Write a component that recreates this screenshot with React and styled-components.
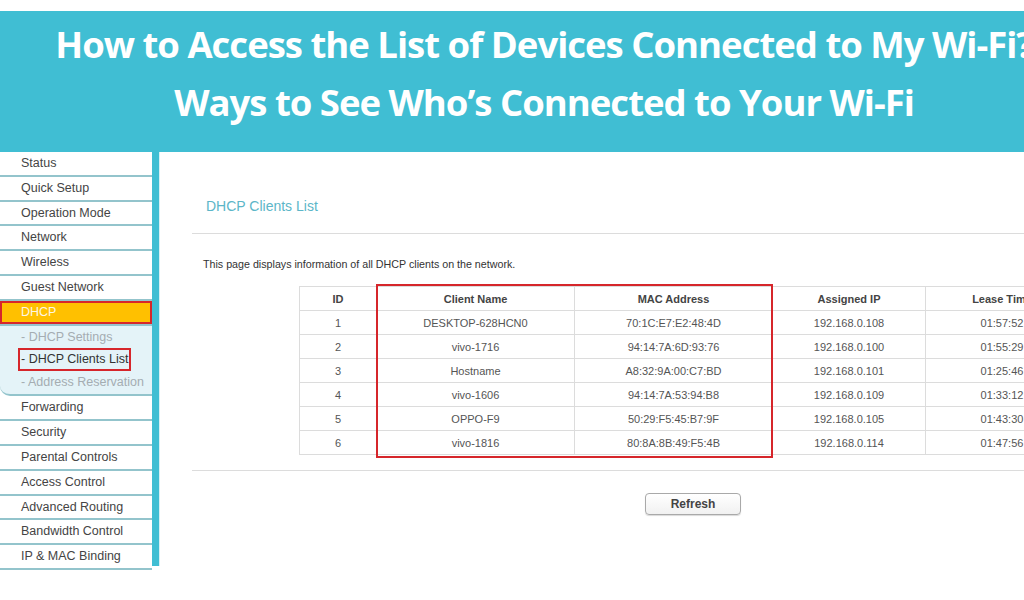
import styled, { createGlobalStyle } from 'styled-components'

const GlobalStyle = createGlobalStyle`
  html, body {
    margin: 0;
    padding: 0;
    background: #fff;
    overflow: hidden;
  }
  body {
    font-family: "Liberation Sans", Arial, sans-serif;
  }
`

const Page = styled.div`
  width: 1024px;
  height: 600px;
  overflow: hidden;
  padding-top: 11px;
  box-sizing: border-box;
`

const Banner = styled.header`
  height: 141px;
  background: #40bed3;
  overflow: hidden;
  display: flex;
  flex-direction: column;
  padding-top: 13px;
  box-sizing: border-box;
`

const BannerLine = styled.h1`
  width: 1088px;
  margin: 0;
  height: 58px;
  line-height: 40px;
  text-align: center;
  white-space: nowrap;
  color: #fff;
  font-family: "Open Sans", "Noto Sans", sans-serif;
  font-weight: 700;
  font-size: 36.5px;
  letter-spacing: -1px;
`

const Body = styled.div`
  display: flex;
  height: 414px;
`

const Sidebar = styled.nav`
  width: 152px;
  flex-shrink: 0;
  border-right: 7px solid #40bed3;
  background: #fff;
`

const NavItem = styled.div`
  height: 22.8px;
  line-height: 22.8px;
  border-bottom: 2px solid #93c4cc;
  padding-left: 21px;
  font-size: 12.5px;
  color: ${p => (p.$active ? '#fdf6e6' : '#444')};
  background: ${p => (p.$active ? '#ffc000' : '#fff')};
  box-shadow: ${p => (p.$active ? 'inset 0 0 0 2px #d6262b' : 'none')};
`

const SubMenu = styled.div`
  background: #e4f3f8;
  border-bottom: 2px solid #93c4cc;
  border-bottom-left-radius: 10px;
  padding-bottom: 1px;
`

const SubItem = styled.div`
  height: 22.6px;
  line-height: 22.6px;
  padding-left: ${p => (p.$current ? '18px' : '21px')};
  font-size: 12.5px;
  color: ${p => (p.$current ? '#333' : '#a5adb2')};
`

const CurrentMark = styled.span`
  display: inline-block;
  height: 19px;
  line-height: 19px;
  padding: 0 1px;
  border: 2px solid #d6262b;
`

const Main = styled.main`
  flex: 1;
  border-left: 1px solid #d8f0f5;
  padding-left: 32px;
  min-width: 0;
`

const Title = styled.h2`
  margin: 0;
  padding: 46px 0 0 14px;
  font-size: 14px;
  line-height: 16px;
  font-weight: 400;
  color: #5cb6c8;
`

const Rule = styled.div`
  height: 1px;
  background: #dcdcdc;
  margin-top: ${p => p.$top}px;
  width: 900px;
`

const Description = styled.p`
  margin: 23px 0 0 11px;
  font-size: 10.7px;
  line-height: 14px;
  color: #333;
`

const TableWrap = styled.div`
  position: relative;
  margin: 15px 0 0 107px;
  width: 760px;
`

const Table = styled.table`
  border-collapse: collapse;
  table-layout: fixed;
  width: 779px;
  font-size: 11px;
  color: #555;

  th, td {
    height: 23px;
    border: 1px solid #dcdcdc;
    text-align: center;
    padding: 0;
  }

  th {
    font-weight: 700;
    color: #444;
  }
`

const Highlight = styled.div`
  position: absolute;
  left: 77px;
  top: -2px;
  width: 393px;
  height: 170px;
  border: 2px solid #d6262b;
  pointer-events: none;
`

const RefreshButton = styled.button`
  display: block;
  margin: 22px 0 0 453px;
  width: 96px;
  height: 22px;
  border: 1px solid #a9a9a9;
  border-radius: 4px;
  background: linear-gradient(#fff, #f1f1f1);
  box-shadow: 0 1px 1px rgba(0, 0, 0, 0.15);
  font-family: "Liberation Sans", Arial, sans-serif;
  font-size: 12px;
  font-weight: 700;
  color: #444;
`

const menuTop = ['Status', 'Quick Setup', 'Operation Mode', 'Network', 'Wireless', 'Guest Network']
const menuBottom = [
  'Forwarding',
  'Security',
  'Parental Controls',
  'Access Control',
  'Advanced Routing',
  'Bandwidth Control',
  'IP & MAC Binding',
]

const clients = [
  ['1', 'DESKTOP-628HCN0', '70:1C:E7:E2:48:4D', '192.168.0.108', '01:57:52'],
  ['2', 'vivo-1716', '94:14:7A:6D:93:76', '192.168.0.100', '01:55:29'],
  ['3', 'Hostname', 'A8:32:9A:00:C7:BD', '192.168.0.101', '01:25:46'],
  ['4', 'vivo-1606', '94:14:7A:53:94:B8', '192.168.0.109', '01:33:12'],
  ['5', 'OPPO-F9', '50:29:F5:45:B7:9F', '192.168.0.105', '01:43:30'],
  ['6', 'vivo-1816', '80:8A:8B:49:F5:4B', '192.168.0.114', '01:47:56'],
]

export default function App() {
  return (
    <Page>
      <GlobalStyle />
      <Banner>
        <BannerLine>How to Access the List of Devices Connected to My Wi-Fi?</BannerLine>
        <BannerLine>Ways to See Who’s Connected to Your Wi-Fi</BannerLine>
      </Banner>
      <Body>
        <Sidebar>
          {menuTop.map(m => (
            <NavItem key={m}>{m}</NavItem>
          ))}
          <NavItem $active>DHCP</NavItem>
          <SubMenu>
            <SubItem>- DHCP Settings</SubItem>
            <SubItem $current>
              <CurrentMark>- DHCP Clients List</CurrentMark>
            </SubItem>
            <SubItem>- Address Reservation</SubItem>
          </SubMenu>
          {menuBottom.map(m => (
            <NavItem key={m}>{m}</NavItem>
          ))}
        </Sidebar>
        <Main>
          <Title>DHCP Clients List</Title>
          <Rule $top={19} />
          <Description>This page displays information of all DHCP clients on the network.</Description>
          <TableWrap>
            <Table>
              <colgroup>
                <col style={{ width: 77 }} />
                <col style={{ width: 198 }} />
                <col style={{ width: 198 }} />
                <col style={{ width: 153 }} />
                <col style={{ width: 153 }} />
              </colgroup>
              <thead>
                <tr>
                  <th>ID</th>
                  <th>Client Name</th>
                  <th>MAC Address</th>
                  <th>Assigned IP</th>
                  <th>Lease Time</th>
                </tr>
              </thead>
              <tbody>
                {clients.map(row => (
                  <tr key={row[0]}>
                    {row.map((cell, i) => (
                      <td key={i}>{cell}</td>
                    ))}
                  </tr>
                ))}
              </tbody>
            </Table>
            <Highlight />
          </TableWrap>
          <Rule $top={15} />
          <RefreshButton>Refresh</RefreshButton>
        </Main>
      </Body>
    </Page>
  )
}
